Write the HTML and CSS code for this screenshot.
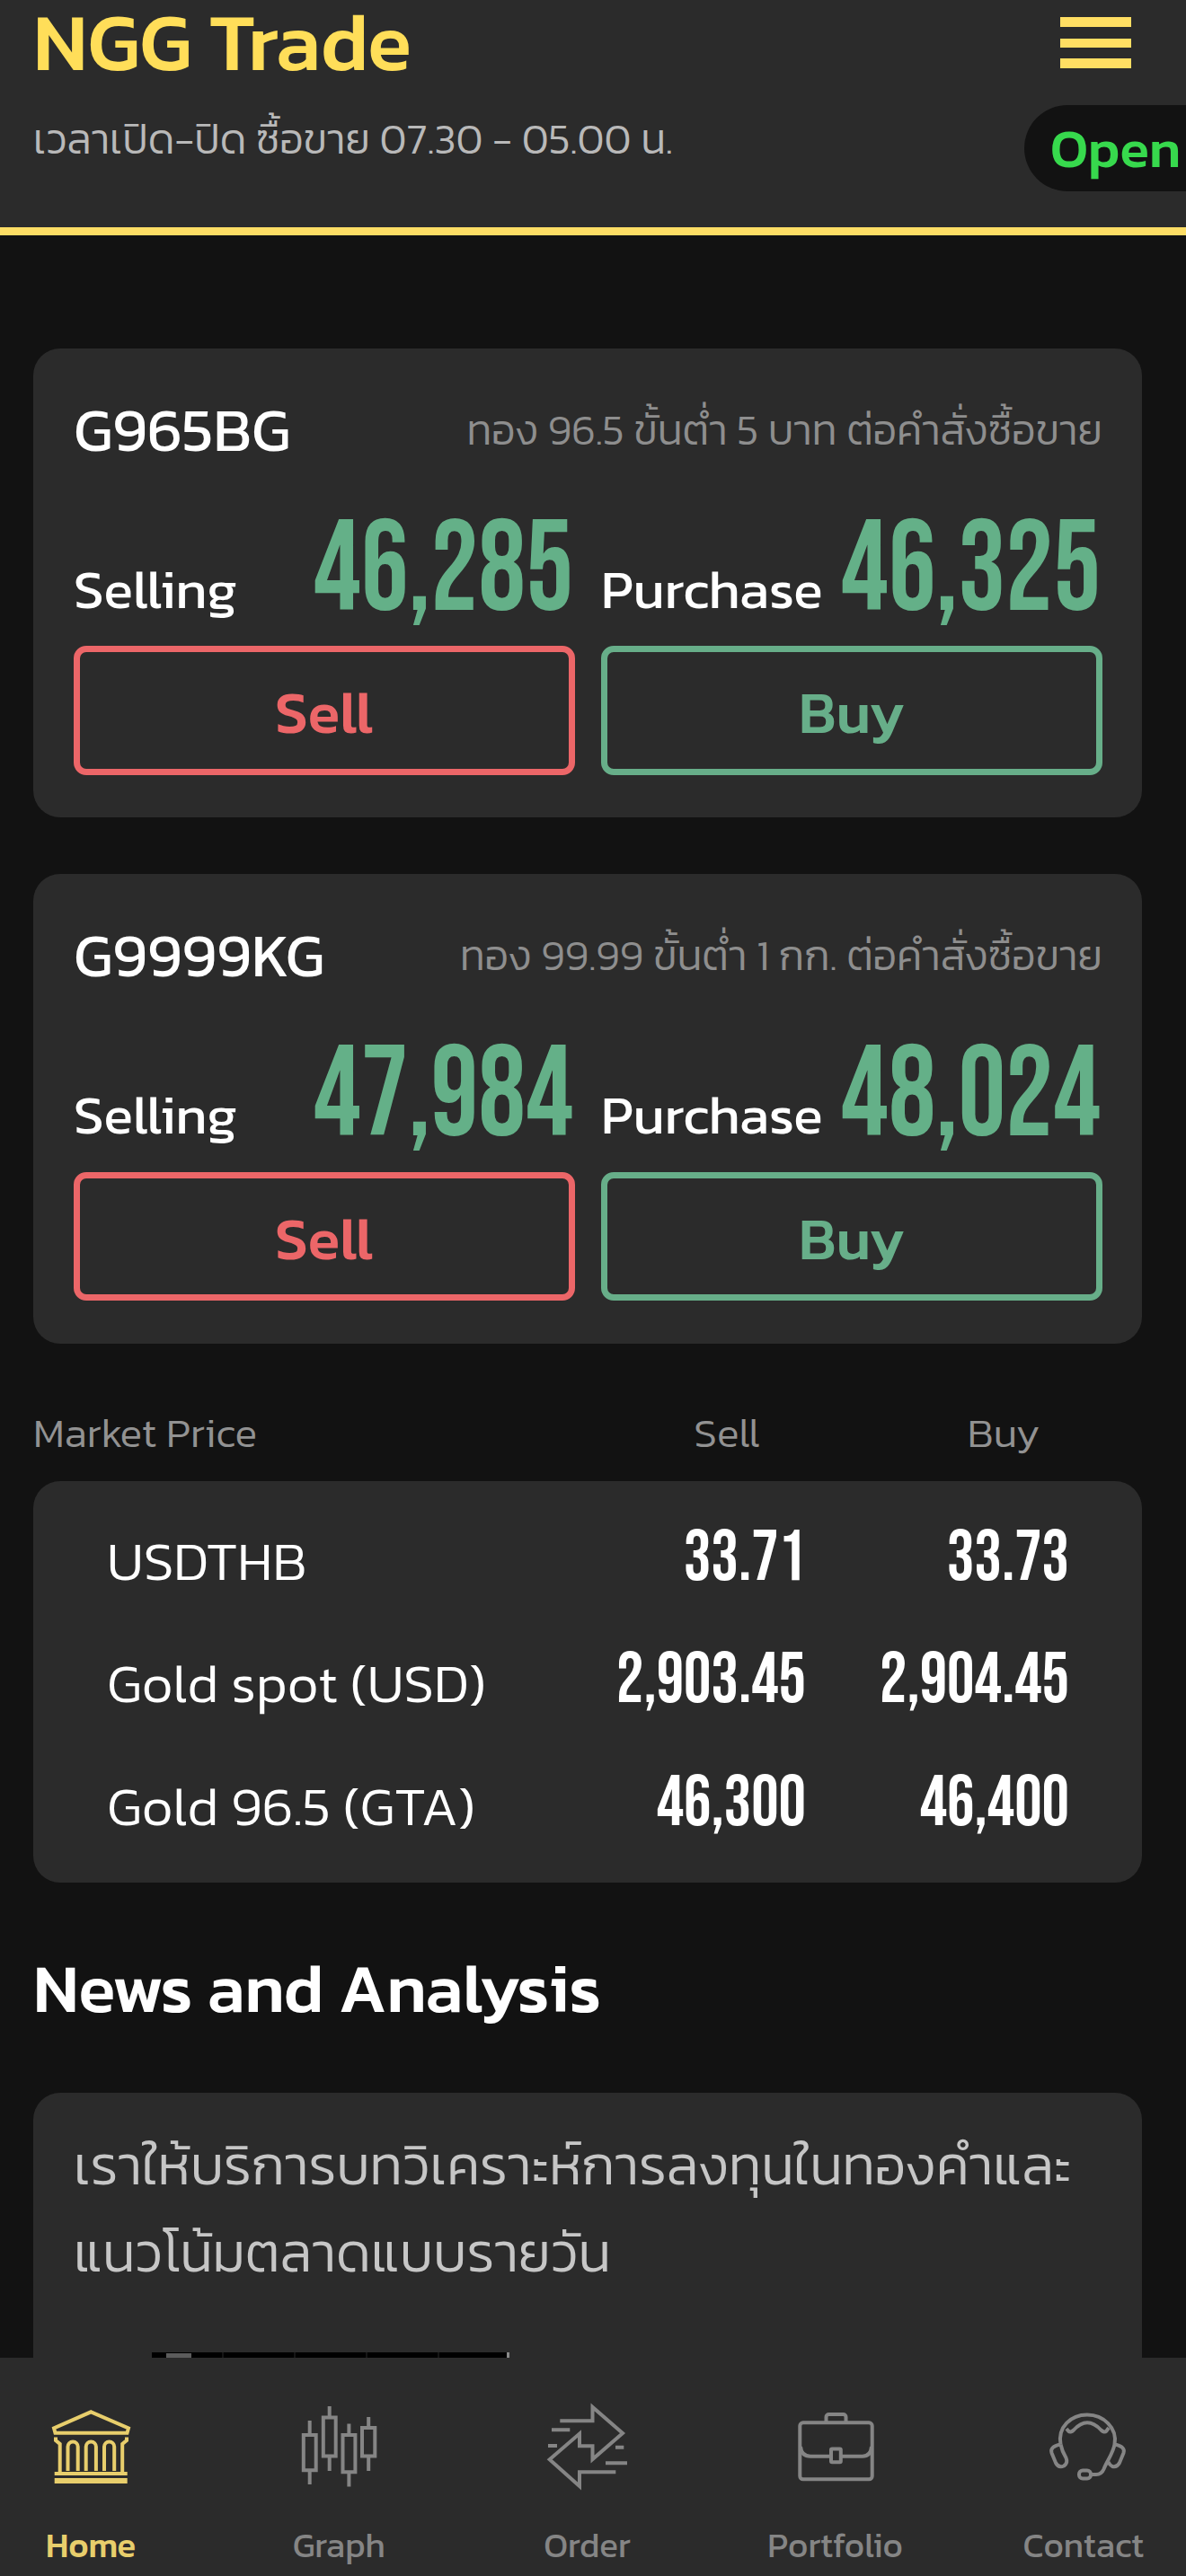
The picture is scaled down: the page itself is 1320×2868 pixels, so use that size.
FILE: index.html
```html
<!DOCTYPE html>
<html lang="th">
<head>
<meta charset="utf-8">
<title>NGG Trade</title>
<link rel="stylesheet" href="styles.css">
</head>
<body>
<div class="app">
  <header class="header">
    <div class="brand">
      <h1 class="brand-name">NGG Trade</h1>
      <p class="hours">เวลาเปิด-ปิด ซื้อขาย 07.30 - 05.00 น.</p>
    </div>
    <div class="header-side">
      <svg class="menu" viewBox="0 0 79 58" fill="#ffde63"><rect width="79" height="11"/><rect y="24" width="79" height="10"/><rect y="46" width="79" height="11"/></svg>
      <div class="status">Open</div>
    </div>
  </header>

  <main class="content">
    <section class="card product">
      <div class="product-head"><h2 class="symbol">G965BG</h2><p class="terms">ทอง 96.5 ขั้นต่ำ 5 บาท ต่อคำสั่งซื้อขาย</p></div>
      <div class="sides">
        <div class="side">
          <div class="quote"><span class="quote-label">Selling</span><span class="price">46,285</span></div>
          <button class="btn btn-sell">Sell</button>
        </div>
        <div class="side">
          <div class="quote"><span class="quote-label">Purchase</span><span class="price">46,325</span></div>
          <button class="btn btn-buy">Buy</button>
        </div>
      </div>
    </section>

    <section class="card product">
      <div class="product-head"><h2 class="symbol">G9999KG</h2><p class="terms">ทอง 99.99 ขั้นต่ำ 1 กก. ต่อคำสั่งซื้อขาย</p></div>
      <div class="sides">
        <div class="side">
          <div class="quote"><span class="quote-label">Selling</span><span class="price">47,984</span></div>
          <button class="btn btn-sell">Sell</button>
        </div>
        <div class="side">
          <div class="quote"><span class="quote-label">Purchase</span><span class="price">48,024</span></div>
          <button class="btn btn-buy">Buy</button>
        </div>
      </div>
    </section>

    <div class="market-head"><span>Market Price</span><span class="col-title">Sell</span><span class="col-title">Buy</span></div>
    <section class="card market">
      <div class="market-row"><span class="market-name">USDTHB</span><span class="rate">33.71</span><span class="rate">33.73</span></div>
      <div class="market-row"><span class="market-name">Gold spot (USD)</span><span class="rate">2,903.45</span><span class="rate">2,904.45</span></div>
      <div class="market-row"><span class="market-name">Gold 96.5 (GTA)</span><span class="rate">46,300</span><span class="rate">46,400</span></div>
    </section>

    <h2 class="section-title">News and Analysis</h2>
    <section class="card news">
      <p class="news-text">เราให้บริการบทวิเคราะห์การลงทุนในทองคำและ<br>แนวโน้มตลาดแบบรายวัน</p>
      <div class="chart-thumb"><span class="chart-caption"></span></div>
    </section>
  </main>

  <nav class="tabs">
    <a class="tab tab-active">
      <svg class="tab-icon" viewBox="0 0 100 100"><path d="M50.3 10.3 92 28.3 90.5 33.8H10.5L9 28.3Z"/><path d="M11 38.5V42L15.7 46V78M90 38.5V42L85.2 46V78M24.5 76V49a5.6 5.6 0 0 1 11.2 0V76M44.7 76V49a5.6 5.6 0 0 1 11.2 0V76M65 76V49a5.6 5.6 0 0 1 11.2 0V76M9.7 79H90.7"/><path d="M9.7 87H90.7" stroke-width="6"/></svg>
      <span>Home</span>
    </a>
    <a class="tab">
      <svg class="tab-icon" viewBox="0 0 100 100"><path d="M10.8 36h13.9v39.3H10.8zM32.8 16.5h13.9v43H32.8zM54.5 36h13.9v41.3H54.5zM76 28h14.3v31.5H76zM17.7 20V36M17.7 75V91M39.7 4V16M39.7 60V76M61.4 23.5V36M61.4 77V93.5M83.2 16V28M83.2 60V76"/></svg>
      <span>Graph</span>
    </a>
    <a class="tab">
      <svg class="tab-icon" viewBox="0 0 100 100"><path d="M20.3 20.3H56.5V5L90 34 56.5 63V48.3H42V34.5L8.7 63.3 42 93V77.3H82.3M11 30.3H31.3M7 48H17M82 49.7H91.3M71 67.3H95"/></svg>
      <span>Order</span>
    </a>
    <a class="tab">
      <svg class="tab-icon" viewBox="0 0 100 100"><rect x="10.3" y="22.3" width="80.4" height="63" rx="3.5"/><path d="M39.5 22V16a3 3 0 0 1 3-3H58.5a3 3 0 0 1 3 3V22M11 49Q12 59.7 22 59.7H45M56 59.7H80Q89 59.7 90 49"/><rect x="45" y="51.5" width="10.8" height="14.7" rx="1"/></svg>
      <span>Portfolio</span>
    </a>
    <a class="tab">
      <svg class="tab-icon" viewBox="0 0 100 100"><path d="M24.500 46.500C21 27 36 13.500 54 13.500S88 28 84.500 46.500C83 56 76 65 72.500 74Q70 80 64 80H58.500"/><path d="M31 29 33 31.500Q35.500 34 39 30.500 54 14 69.500 30.500 73 34 75.500 31.500L78 28"/><path d="M24.500 46.500Q12 49 14.500 56L19 67Q22 73 28 70.500 33 67 30.500 61.500 26 54 24.500 46.500M84.500 46.500Q97 49 94.500 56L90 67Q87 72.500 82 71 79 69.500 77.500 66"/><rect x="45" y="75.500" width="13" height="9" rx="4"/></svg>
      <span>Contact</span>
    </a>
  </nav>
</div>
</body>
</html>
```
FILE: styles.css
```css
* { box-sizing: border-box; margin: 0; }

body {
  background: #121212;
  color: #fff;
  font-family: Kanit, "Noto Sans", sans-serif;
  font-weight: 400;
  overflow: hidden;
}

.app { display: flex; flex-direction: column; width: 1320px; height: 2868px; overflow: hidden; }

/* Header */
.header {
  flex: none;
  display: flex;
  justify-content: space-between;
  height: 262px;
  padding-left: 37px;
  background: #2b2b2b;
  border-bottom: 9px solid #fddd65;
}
.brand-name { font-size: 90px; line-height: 94px; font-weight: 500; color: #ffde59; }
.hours { margin-top: 31px; font-size: 46.35px; line-height: 60px; font-weight: 300; color: #b9b9b9; white-space: nowrap; }
.header-side { width: 180px; padding-top: 19px; }
.menu { display: block; width: 79px; height: 58px; margin-left: 40px; }
.status {
  width: 230px;
  height: 96px;
  margin-top: 40px;
  padding-left: 29px;
  border-radius: 48px;
  background: #121212;
  color: #37d94d;
  font-size: 60px;
  line-height: 96px;
  font-weight: 500;
}

/* Content */
.content { flex: 1; min-height: 0; padding: 125.5px 49px 0 37px; overflow: hidden; }
.card { background: #2b2b2b; border-radius: 30px; }

/* Product cards */
.product { padding: 51.2px 44px 47.5px 45px; }
.product + .product { margin-top: 62.5px; }
.product-head { display: flex; justify-content: space-between; align-items: center; height: 80px; }
.symbol { font-size: 67.5px; line-height: 80px; font-weight: 400; }
.terms { font-size: 46.5px; line-height: 60px; font-weight: 300; color: #8e8e8e; white-space: nowrap; }
.sides { display: grid; grid-template-columns: 1fr 1fr; gap: 29px; margin-top: 47.3px; }
.quote { display: flex; justify-content: space-between; align-items: flex-end; height: 140px; }
.quote-label { padding-bottom: 18px; font-size: 60.5px; line-height: 64px; }
.price {
  margin: 0 1.5px 0 -30px;
  font-family: "Bebas Neue", "Open Sans Condensed", sans-serif;
  font-size: 144px;
  line-height: 140px;
  color: #64b088;
  transform: scaleX(0.918);
  transform-origin: right;
}
.btn {
  display: block;
  width: 100%;
  height: 143.5px;
  margin-top: 13.5px;
  padding: 4px 0 0;
  border: 7px solid;
  border-radius: 14px;
  background: none;
  font: 500 65.5px/126px Kanit, "Noto Sans", sans-serif;
  text-align: center;
}
.btn-sell { color: #ec6668; }
.btn-buy { color: #67ae89; }

/* Market table */
.market-head {
  display: grid;
  grid-template-columns: 1fr 308px 308px;
  margin: 69px 0 24px;
  font-size: 46.2px;
  line-height: 60px;
  font-weight: 300;
  color: #929292;
}
.col-title { text-align: center; }
.market { padding: 21px 81.5px 17px 82px; }
.market-row { display: grid; grid-template-columns: 1fr 293px 293px; align-items: baseline; height: 136.5px; }
.market-name { font-size: 60.6px; line-height: 136px; font-weight: 300; }
.rate {
  font-family: "Bebas Neue", "Open Sans Condensed", sans-serif;
  font-size: 80px;
  line-height: 100px;
  text-align: right;
  transform: scaleX(0.95);
  transform-origin: right;
}

/* News */
.section-title { margin: 73px 0 71px; font-size: 75.4px; line-height: 90px; font-weight: 500; }
.news { height: 420px; padding: 33px 45px 0; }
.news-text { font-size: 60.85px; line-height: 96.5px; font-weight: 300; color: #c6c6c6; white-space: nowrap; }
.chart-thumb {
  width: 398px;
  height: 90px;
  margin: 63px 0 0 87px;
  padding: 1px 0 0 16px;
  border-right: 3px solid #8a8a8a;
  background: #000 repeating-linear-gradient(90deg, #000 0 78px, #151515 78px 80px);
}
.chart-caption { display: block; width: 28px; height: 5px; background: #5c5c5c; }

/* Bottom tabs */
.tabs {
  flex: none;
  display: grid;
  grid-template-columns: repeat(5, 276.2px);
  width: 1381px;
  height: 243px;
  margin-left: -37px;
  padding-top: 50px;
  background: #2b2b2b;
}
.tab { display: flex; flex-direction: column; align-items: center; gap: 34px; color: #858585; font-size: 38.6px; line-height: 50px; }
.tab-active { color: #e8ce6c; font-size: 38px; font-weight: 500; }
.tab-icon { width: 100px; height: 100px; fill: none; stroke: currentColor; stroke-width: 4; }
```
